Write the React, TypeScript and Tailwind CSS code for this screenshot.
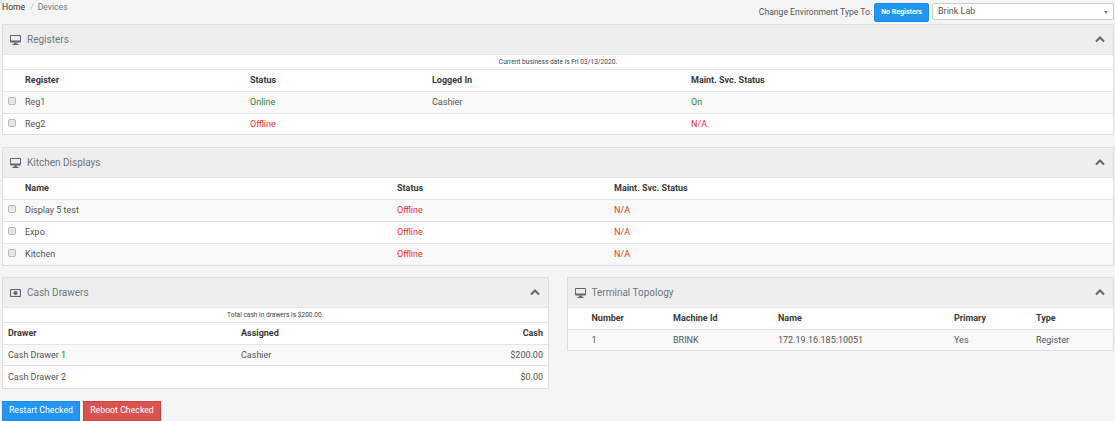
import React from "react";

const Monitor = () => (
  <svg width="11" height="10" viewBox="0 0 11 10" className="shrink-0">
    <rect x="0" y="0" width="11" height="7.5" rx="1" fill="#5f6773" />
    <rect x="1" y="1" width="9" height="4.5" fill="#eeeeee" />
    <rect x="4.25" y="7.5" width="2.5" height="1.5" fill="#5f6773" />
    <rect x="2.5" y="8.75" width="6" height="1.25" fill="#5f6773" />
  </svg>
);

const Money = () => (
  <svg width="11" height="8" viewBox="0 0 11 8" className="shrink-0">
    <rect x="0" y="0" width="11" height="8" rx="0.75" fill="#5f6773" />
    <rect x="1.1" y="1.1" width="8.8" height="5.8" fill="#eeeeee" />
    <circle cx="5.5" cy="4" r="2.1" fill="#5f6773" />
  </svg>
);

const Chevron = () => (
  <svg width="10" height="7" viewBox="0 0 10 7" className="shrink-0">
    <path d="M1 5.5L5 1.5L9 5.5" fill="none" stroke="#5f6773" strokeWidth="2" />
  </svg>
);

const Panel = ({ title, icon, children, className = "" }: { title: string; icon: React.ReactNode; children: React.ReactNode; className?: string }) => (
  <section className={`border border-[#dddddd] bg-white ${className}`}>
    <header className="flex h-[30px] items-center border-b border-[#e4e4e4] bg-[#eeeeee] pl-[7px] pr-[8px]">
      <span className="flex w-[17px] items-center">{icon}</span>
      <h2 className="text-[10px] font-normal text-[#6f7785]">{title}</h2>
      <span className="ml-auto"><Chevron /></span>
    </header>
    {children}
  </section>
);

const Note = ({ children }: { children: React.ReactNode }) => (
  <div className="flex h-[15px] items-center justify-center border-b border-[#e4e4e4] bg-white text-[6.6px] leading-none text-[#444444]">{children}</div>
);

const Box = () => <span className="absolute left-[5px] top-[5px] h-[8px] w-[8px] rounded-[2px] border border-[#b8b8b8] bg-[#e8e8e8]" />;

type Cell = { text: string; w: string; color?: string; right?: boolean };

const Row = ({ cells, head, shade, check, h = "h-[22px]", pl }: { cells: Cell[]; head?: boolean; shade?: boolean; check?: boolean; h?: string; pl: string }) => (
  <div className={`relative flex items-center border-b border-[#e4e4e4] last:border-b-0 ${h} ${pl} ${head ? "" : "pt-[1px]"} ${shade ? "bg-[#f9f9f9]" : "bg-white"} ${head ? "font-bold text-[#3a3a3a]" : "text-[#555555]"}`}>
    {check && <Box />}
    {cells.map((c, i) => (
      <span key={i} className={`${c.w} ${c.right ? "text-right" : ""} ${c.color ?? ""}`}>{c.text}</span>
    ))}
  </div>
);

const green = "text-[#1f8a1f]";
const red = "text-[#f22f2f]";

export default function App() {
  return (
    <div className="h-[421px] w-[1115px] overflow-hidden bg-[#f5f5f5] font-['Roboto','Liberation_Sans',sans-serif] text-[9px]">
      <div className="flex h-[24px] items-start pl-[2px] pr-[1px]">
        <nav className="flex pt-[2px] text-[8.6px] leading-[11px]">
          <span className="text-[#333333]">Home</span>
          <span className="ml-[5px] text-[#bbbbbb]">/</span>
          <span className="ml-[4px] text-[#777777]">Devices</span>
        </nav>
        <div className="ml-auto flex items-start pt-[3px]">
          <span className="mr-[2px] pt-[4px] text-[8.6px] leading-[11px] text-[#555555]">Change Environment Type To:</span>
          <button className="h-[19px] w-[55px] rounded-[2px] border border-[#1f88e5] bg-[#2196f3] text-[7px] font-bold text-white">No Registers</button>
          <div className="relative ml-[3px] flex h-[17px] w-[182px] items-center rounded-[2px] border border-[#cccccc] bg-white pl-[5px] text-[9px] text-[#555555]">
            Brink Lab
            <span className="absolute right-[5px] top-[7px] h-0 w-0 border-x-[2px] border-t-[3px] border-x-transparent border-t-[#888888]" />
          </div>
        </div>
      </div>

      <div className="flex flex-col pl-[2px] pr-[1px]">
        <Panel title="Registers" icon={<Monitor />}>
          <Note>Current business date is Fri 03/13/2020.</Note>
          <Row head pl="pl-[22px]" cells={[{ text: "Register", w: "w-[225px]" }, { text: "Status", w: "w-[182px]" }, { text: "Logged In", w: "w-[259px]" }, { text: "Maint. Svc. Status", w: "w-[200px]" }]} />
          <Row shade check pl="pl-[22px]" cells={[{ text: "Reg1", w: "w-[225px]" }, { text: "Online", w: "w-[182px]", color: green }, { text: "Cashier", w: "w-[259px]" }, { text: "On", w: "w-[200px]", color: green }]} />
          <Row check h="h-[20px]" pl="pl-[22px]" cells={[{ text: "Reg2", w: "w-[225px]" }, { text: "Offline", w: "w-[182px]", color: red }, { text: "", w: "w-[259px]" }, { text: "N/A", w: "w-[200px]", color: red }]} />
        </Panel>

        <Panel title="Kitchen Displays" icon={<Monitor />} className="mt-[12px]">
          <Row head h="h-[22px]" pl="pl-[22px]" cells={[{ text: "Name", w: "w-[372px]" }, { text: "Status", w: "w-[217px]" }, { text: "Maint. Svc. Status", w: "w-[200px]" }]} />
          <Row shade check pl="pl-[22px]" cells={[{ text: "Display 5 test", w: "w-[372px]" }, { text: "Offline", w: "w-[217px]", color: red }, { text: "N/A", w: "w-[200px]", color: red }]} />
          <Row check pl="pl-[22px]" cells={[{ text: "Expo", w: "w-[372px]" }, { text: "Offline", w: "w-[217px]", color: red }, { text: "N/A", w: "w-[200px]", color: red }]} />
          <Row shade check h="h-[21px]" pl="pl-[22px]" cells={[{ text: "Kitchen", w: "w-[372px]" }, { text: "Offline", w: "w-[217px]", color: red }, { text: "N/A", w: "w-[200px]", color: red }]} />
        </Panel>

        <div className="mt-[11px] flex items-start">
          <Panel title="Cash Drawers" icon={<Money />} className="w-[547px]">
            <Note>Total cash in drawers is $200.00.</Note>
            <Row head pl="pl-[5px]" cells={[{ text: "Drawer", w: "w-[233px]" }, { text: "Assigned", w: "w-[170px]" }, { text: "Cash", w: "w-[132px]", right: true }]} />
            <Row shade pl="pl-[5px]" h="h-[21px]" cells={[{ text: "Cash Drawer 1", w: "w-[233px]" }, { text: "Cashier", w: "w-[170px]" }, { text: "$200.00", w: "w-[132px]", right: true }]} />
            <Row pl="pl-[5px]" h="h-[22px]" cells={[{ text: "Cash Drawer 2", w: "w-[233px]" }, { text: "", w: "w-[170px]" }, { text: "$0.00", w: "w-[132px]", right: true }]} />
          </Panel>
          <Panel title="Terminal Topology" icon={<Monitor />} className="ml-[18px] w-[548px]">
            <Row head pl="pl-[24px]" h="h-[22px] pt-[1px]" cells={[{ text: "Number", w: "w-[81.5px]" }, { text: "Machine Id", w: "w-[105px]" }, { text: "Name", w: "w-[176px]" }, { text: "Primary", w: "w-[82px]" }, { text: "Type", w: "w-[60px]" }]} />
            <Row shade pl="pl-[24px]" h="h-[20px]" cells={[{ text: "1", w: "w-[81.5px]" }, { text: "BRINK", w: "w-[105px]" }, { text: "172.19.16.185:10051", w: "w-[176px]" }, { text: "Yes", w: "w-[82px]" }, { text: "Register", w: "w-[60px]" }]} />
          </Panel>
        </div>

        <div className="mt-[12px] flex gap-[3px]">
          <button className="h-[20px] w-[78px] border border-[#1f88e5] bg-[#2196f3] text-[8.75px] text-white">Restart Checked</button>
          <button className="h-[20px] w-[78px] border border-[#d43f3a] bg-[#d9534f] text-[8.75px] text-white">Reboot Checked</button>
        </div>
      </div>
    </div>
  );
}
